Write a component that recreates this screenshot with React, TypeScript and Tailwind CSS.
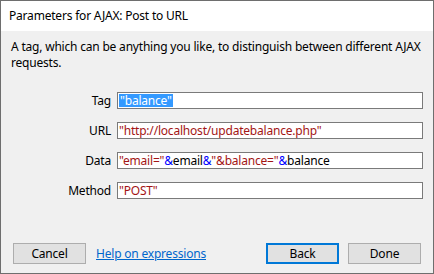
import React from "react";

const font = { fontFamily: '"Noto Sans", "Open Sans", sans-serif' };

function Field({ label, children }: { label: string; children: React.ReactNode }) {
  return (
    <div className="flex items-center h-[17px]">
      <div className="w-[110px] text-right text-[12px] tracking-[-0.2px] text-black leading-none">{label}</div>
      <div className="ml-[6px] w-[306px] h-[17px] border border-[#7a7a7a] bg-white flex items-center pl-[1px] text-[12px] tracking-[-0.2px] leading-none whitespace-pre">
        {children}
      </div>
    </div>
  );
}

export default function App() {
  const red = "text-[#a31515]";
  const blue = "text-[#0000ff]";
  return (
    <div className="w-[434px] h-[274px] border border-[#6e6e6e] bg-[#f0f0f0] flex flex-col text-black" style={font}>
      <div className="h-[30px] bg-white flex items-center pl-[8px] text-[12px] tracking-[-0.2px] shrink-0">Parameters for AJAX: Post to URL</div>
      <div className="px-[10px] pt-[8px] text-[12px] tracking-[-0.2px] leading-[16px] whitespace-nowrap">
        A tag, which can be anything you like, to distinguish between different AJAX
        <br />
        requests.
      </div>
      <div className="mt-[21px] flex flex-col gap-[13px]">
        <Field label="Tag">
          <span className="bg-[#3399ff] text-white px-[1px] h-[13px] flex items-center">"balance"</span>
        </Field>
        <Field label="URL">
          <span className={red}>"http://localhost/updatebalance.php"</span>
        </Field>
        <Field label="Data">
          <span className={red}>"email="</span>
          <span className={blue}>&amp;</span>
          <span>email</span>
          <span className={blue}>&amp;</span>
          <span className={red}>"&amp;balance="</span>
          <span className={blue}>&amp;</span>
          <span>balance</span>
        </Field>
        <Field label="Method">
          <span className={red}>"POST"</span>
        </Field>
      </div>
      <div className="mt-auto mb-[9px] flex items-center pl-[12px] pr-[12px] text-[12px] tracking-[-0.2px]">
        <button className="w-[73px] h-[21px] border border-[#adadad] bg-[#e1e1e1] leading-none">Cancel</button>
        <a className="ml-[10px] text-[#0066cc] underline leading-none">Help on expressions</a>
        <div className="flex-1" />
        <button className="w-[73px] h-[21px] border-2 border-[#0078d7] bg-[#e1e1e1] leading-none">Back</button>
        <button className="ml-[9px] w-[73px] h-[21px] border border-[#adadad] bg-[#e1e1e1] leading-none">Done</button>
      </div>
    </div>
  );
}
